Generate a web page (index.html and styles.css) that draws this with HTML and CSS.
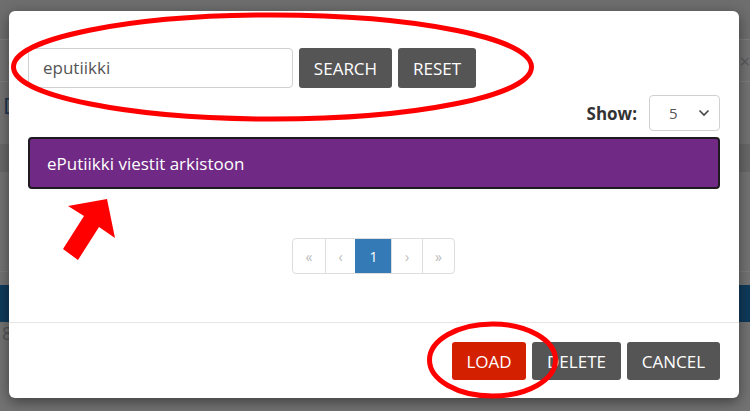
FILE: index.html
```html
<!DOCTYPE html>
<html>
<head>
<meta charset="utf-8">
<link rel="stylesheet" href="styles.css">
</head>
<body>
<div class="page">
  <div class="pg-head"></div>
  <div class="pg-tabs"><span class="pg-x">×</span></div>
  <div class="pg-title">D</div>
  <div class="pg-band"></div>
  <div class="pg-gap"></div>
  <div class="pg-blue"></div>
  <div class="pg-num">8</div>
</div>

<div class="modal">
  <div class="modal-body">
    <div class="search-row">
      <div class="search-input">eputiikki</div>
      <button class="btn btn-dark btn-search">SEARCH</button>
      <button class="btn btn-dark btn-reset">RESET</button>
    </div>
    <div class="show-row">
      <span class="show-label">Show:</span>
      <div class="select">
        <span class="select-val">5</span>
        <svg class="chev" width="12" height="8" viewBox="0 0 12 8"><path d="M1.5 1.5 L6 6 L10.5 1.5" fill="none" stroke="#444" stroke-width="1.6"/></svg>
      </div>
    </div>
    <div class="item">ePutiikki viestit arkistoon</div>
    <div class="pager-wrap">
      <div class="pager">
        <span class="pg-cell c1">«</span>
        <span class="pg-cell c2">‹</span>
        <span class="pg-cell c3 active">1</span>
        <span class="pg-cell c4">›</span>
        <span class="pg-cell c5">»</span>
      </div>
    </div>
  </div>
  <div class="modal-footer">
    <button class="btn btn-red btn-load">LOAD</button>
    <button class="btn btn-dark btn-delete">DELETE</button>
    <button class="btn btn-dark btn-cancel">CANCEL</button>
  </div>
</div>

<svg class="marks" width="750" height="411" viewBox="0 0 750 411">
  <ellipse cx="272.5" cy="67" rx="259" ry="52" fill="none" stroke="#ff0000" stroke-width="5"/>
  <ellipse cx="492.5" cy="360" rx="63" ry="36" fill="none" stroke="#ff0000" stroke-width="5"/>
  <polygon points="107,199 115,238 99,227 78,260 63,249 84,216 68,206" fill="#ff0000"/>
</svg>
</body>
</html>
```

FILE: styles.css
```css
* { box-sizing: border-box; }
html, body { margin: 0; padding: 0; }
body {
  width: 750px;
  height: 411px;
  overflow: hidden;
  background: #737373;
  font-family: "Open Sans", "Liberation Sans", sans-serif;
  position: relative;
}
.page { width: 750px; height: 411px; }
.pg-head { height: 40px; background: #6e6e6e; border-bottom: 1px solid #7e7e7e; }
.pg-tabs { height: 42px; border-bottom: 1px solid #7e7e7e; position: relative; }
.pg-x { position: absolute; right: 0; top: 9px; color: #5a5a5a; font-size: 18px; }
.pg-title { height: 62px; color: #1b3550; font-size: 22px; padding: 8px 0 0 3px; }
.pg-band { height: 28px; background: #686868; }
.pg-gap { height: 100px; border-bottom: 1px solid #7c7c7c; }
.pg-blue { height: 37px; margin-top: 13px; background: #0f3a5b; }
.pg-num { color: #555; font-size: 18px; padding-left: 2px; line-height: 22px; }

.modal {
  position: absolute;
  left: 9px;
  top: 11px;
  width: 730px;
  height: 387px;
  background: #fff;
  border-radius: 6px;
  box-shadow: 0 4px 14px rgba(0,0,0,0.45);
  display: flex;
  flex-direction: column;
}
.modal-body { padding: 37px 19px 0 19px; height: 311px; }
.search-row { display: flex; gap: 6px; height: 40px; }
.search-input {
  width: 265px;
  height: 40px;
  border: 1px solid #d0d0d0;
  border-radius: 4px;
  color: #555;
  font-size: 17px;
  line-height: 38px;
  padding-left: 14px;
}
.btn {
  border: none;
  border-radius: 3px;
  color: #fff;
  font-family: "Open Sans", "Liberation Sans", sans-serif;
  font-size: 17px;
  padding: 0;
}
.btn-dark { background: #555555; }
.btn-red { background: #d22000; }
.btn-search { width: 93px; height: 40px; }
.btn-reset { width: 78px; height: 40px; }

.show-row {
  display: flex;
  justify-content: flex-end;
  align-items: center;
  gap: 12px;
  margin-top: 7px;
  height: 36px;
}
.show-label { font-weight: bold; font-size: 17px; color: #333; }
.select {
  width: 71px;
  height: 36px;
  border: 1px solid #d0d0d0;
  border-radius: 4px;
  display: flex;
  align-items: center;
  justify-content: space-between;
  padding: 0 9px 0 19px;
}
.select-val { color: #555; font-size: 15px; }
.chev { display: block; }

.item {
  margin-top: 6px;
  height: 52px;
  background: #702984;
  border: 2px solid #1f1a22;
  border-radius: 4px;
  color: #fff;
  font-size: 17px;
  line-height: 50px;
  padding-left: 17px;
}

.pager-wrap { display: flex; justify-content: center; margin-top: 49px; padding-right: 1px; }
.pager {
  display: flex;
  height: 36px;
  border: 1px solid #dddddd;
  border-radius: 4px;
  overflow: hidden;
}
.pg-cell {
  display: flex;
  align-items: center;
  justify-content: center;
  color: #bbbbbb;
  font-size: 14px;
  border-left: 1px solid #dddddd;
}
.pg-cell.c1 { width: 32px; border-left: none; }
.pg-cell.c2 { width: 30px; }
.pg-cell.c3 { width: 36px; }
.pg-cell.c4 { width: 31px; }
.pg-cell.c5 { width: 32px; }
.pg-cell.active { background: #337ab7; color: #fff; border-left-color: #337ab7; }

.modal-footer {
  border-top: 1px solid #e5e5e5;
  padding: 19px 19px 0 19px;
  display: flex;
  justify-content: flex-end;
  gap: 6px;
}
.btn-load { width: 74px; height: 38px; }
.btn-delete { width: 89px; height: 38px; }
.btn-cancel { width: 93px; height: 38px; }

.marks { position: absolute; left: 0; top: 0; pointer-events: none; }
```
